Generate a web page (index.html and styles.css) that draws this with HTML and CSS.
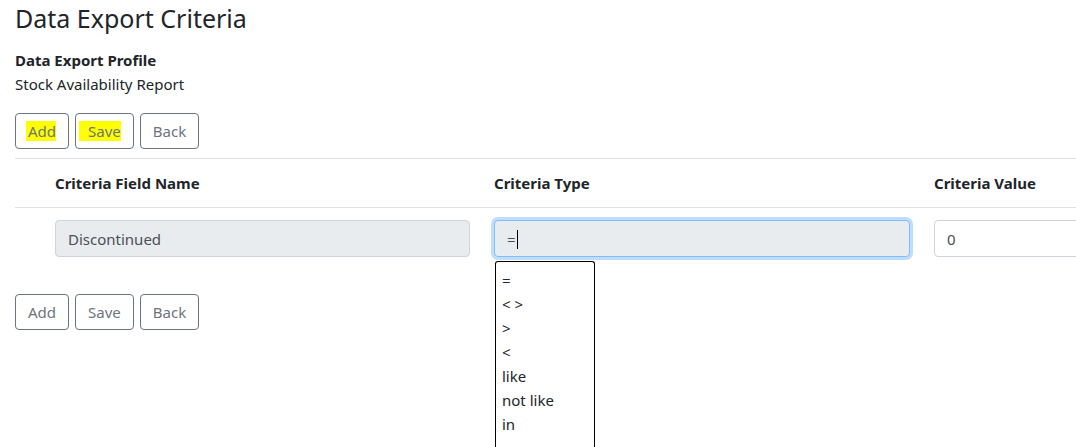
FILE: index.html
```html
<!DOCTYPE html>
<html>
<head>
<meta charset="utf-8">
<link rel="stylesheet" href="styles.css">
</head>
<body>
<div class="page">
  <h1 class="title">Data Export Criteria</h1>
  <div class="profile">
    <div class="profile-label">Data Export Profile</div>
    <div class="profile-name">Stock Availability Report</div>
  </div>
  <div class="actions top">
    <button class="btn"><span class="hl hl-add">Add</span></button>
    <button class="btn"><span class="hl hl-save">Save</span></button>
    <button class="btn">Back</button>
  </div>
  <div class="grid-wrap">
    <table class="grid">
      <colgroup>
        <col class="c0"><col class="c1"><col class="c2"><col class="c3">
      </colgroup>
      <thead>
        <tr>
          <th></th>
          <th>Criteria Field Name</th>
          <th>Criteria Type</th>
          <th>Criteria Value</th>
        </tr>
      </thead>
      <tbody>
        <tr>
          <td></td>
          <td><div class="field readonly">Discontinued</div></td>
          <td class="type-cell">
            <div class="field readonly focused">=<span class="caret"></span></div>
            <ul class="options">
              <li>=</li>
              <li>&lt; &gt;</li>
              <li>&gt;</li>
              <li>&lt;</li>
              <li>like</li>
              <li>not like</li>
              <li>in</li>
            </ul>
          </td>
          <td><div class="field">0</div></td>
        </tr>
      </tbody>
    </table>
  </div>
  <div class="actions bottom">
    <button class="btn">Add</button>
    <button class="btn">Save</button>
    <button class="btn">Back</button>
  </div>
</div>
</body>
</html>
```
FILE: styles.css
```css
html, body {
  margin: 0;
  padding: 0;
  background: #fff;
}
body {
  font-family: "Noto Sans", "Open Sans", sans-serif;
  font-size: 15px;
  line-height: 24px;
  color: #212529;
  min-height: 447px;
  overflow-x: clip;
}
.page {
  padding-left: 15px;
}
.title {
  margin: 0;
  padding-top: 3px;
  font-size: 25px;
  line-height: 31px;
  font-weight: 400;
  color: #212529;
}
.profile {
  margin-top: 14px;
}
.profile-label {
  font-weight: 700;
}
.actions {
  display: flex;
  gap: 6px;
}
.actions.top {
  margin-top: 17px;
}
.actions.bottom {
  margin-top: 25px;
}
.btn {
  font-family: inherit;
  font-size: 15px;
  line-height: 24px;
  color: #6c757d;
  background: #fff;
  border: 1px solid #6c757d;
  border-radius: 4px;
  padding: 5px 12px;
  height: 36px;
}
.hl {
  background: #ffff00;
}
.hl-add {
  margin-left: -2px;
  padding-left: 2px;
}
.hl-save {
  padding-left: 9px;
  margin-left: -9px;
}
.grid-wrap {
  margin-top: 9px;
}
.grid {
  border-collapse: collapse;
  table-layout: fixed;
  width: 1346px;
}
.c0 { width: 28px; }
.c1 { width: 439px; }
.c2 { width: 440px; }
.c3 { width: 439px; }
.grid th {
  text-align: left;
  font-weight: 700;
  padding: 12px;
  border-top: 1px solid #dee2e6;
  border-bottom: 1px solid #dee2e6;
}
.grid td {
  padding: 12px;
  vertical-align: top;
}
.field {
  height: 37px;
  box-sizing: border-box;
  border: 1px solid #ced4da;
  border-radius: 4px;
  padding: 6px 12px;
  color: #495057;
  background: #fff;
  line-height: 24px;
}
.field.readonly {
  background: #e9ecef;
}
.field.focused {
  border-color: #80bdff;
  box-shadow: 0 0 0 3px rgba(0, 123, 255, 0.25);
}
.caret {
  display: inline-block;
  width: 1px;
  height: 19px;
  background: #000;
  vertical-align: -4px;
  margin-left: 1px;
}
.type-cell {
  position: relative;
}
.options {
  position: absolute;
  left: 13px;
  top: 53px;
  width: 100px;
  box-sizing: border-box;
  height: 186px;
  margin: 0;
  padding: 6px 0 0 6px;
  list-style: none;
  border: 1px solid #000;
  border-bottom: 0;
  border-radius: 3px 3px 0 0;
  background: #fff;
  color: #212529;
  font-size: 15px;
  line-height: 24px;
}
```
